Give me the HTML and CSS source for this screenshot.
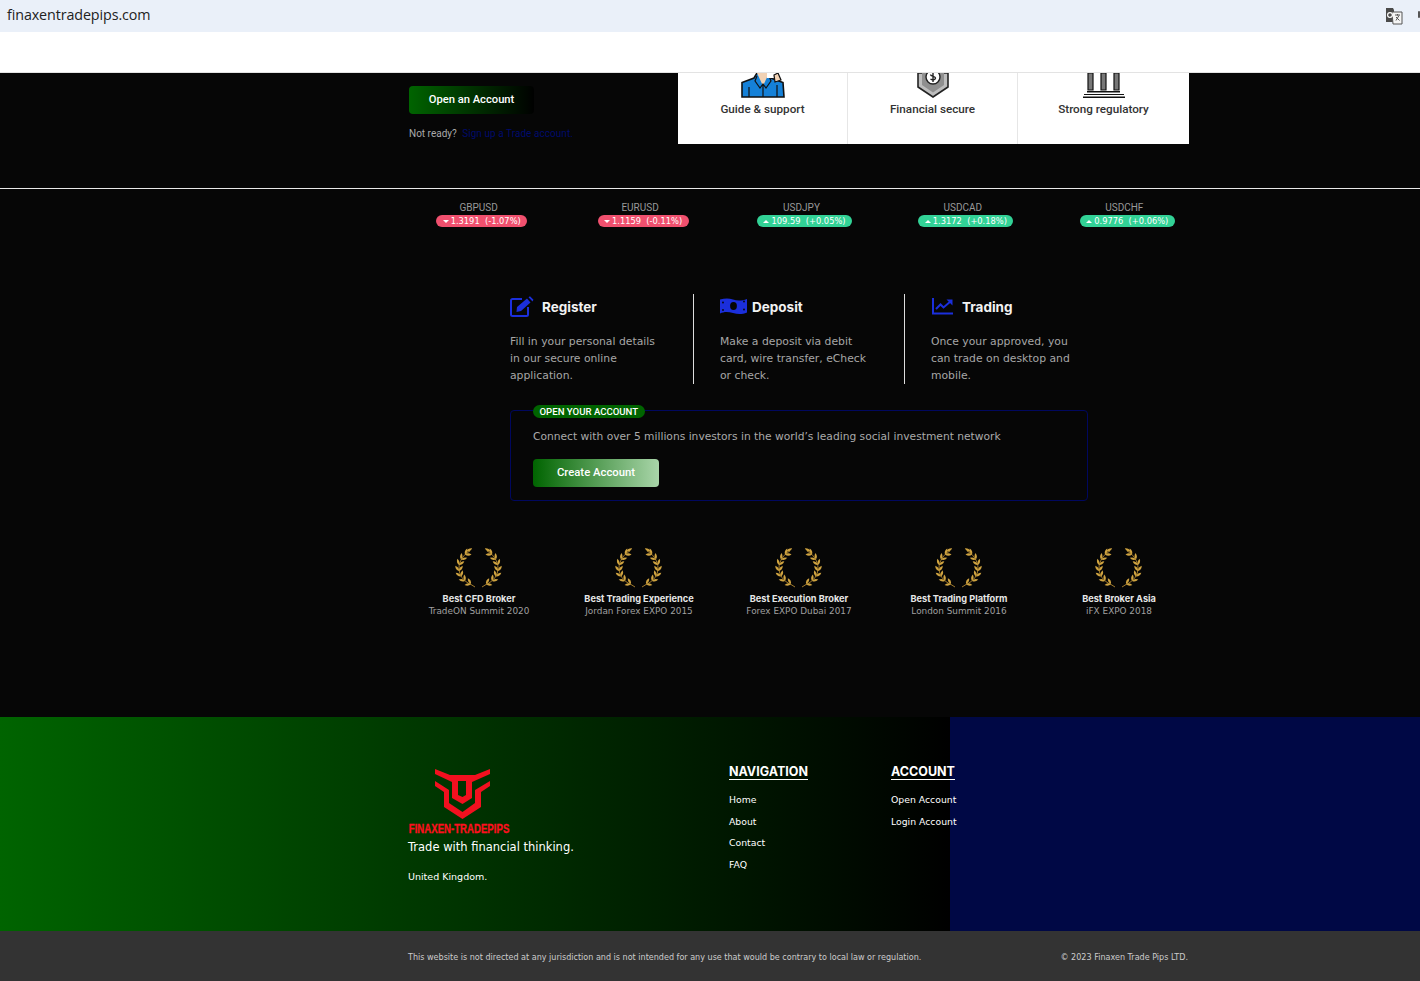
FILE: index.html
```html
<!DOCTYPE html>
<html lang="en">
<head>
<meta charset="utf-8">
<title>finaxentradepips.com</title>
<link rel="stylesheet" href="styles.css">
</head>
<body>
<svg class="defs" width="0" height="0" aria-hidden="true">
  <path id="leaf" d="M0 0Q3-2.400 6.500 0Q3 2.400 0 0Z"/>
  <symbol id="branch" viewBox="0 0 23 40">
    <path d="M20 39L16 36.500C8 33 4 27 4 20C4 13 9 6 15 3" fill="none" stroke="#b08630" stroke-width=".9"/>
    <g fill="#cfa340">
      <use href="#leaf" transform="translate(16 36) rotate(171)"/>
      <use href="#leaf" transform="translate(16 36) rotate(241)"/>
      <use href="#leaf" transform="translate(10 33) rotate(193)"/>
      <use href="#leaf" transform="translate(10 33) rotate(263)"/>
      <use href="#leaf" transform="translate(6 28.500) rotate(215)"/>
      <use href="#leaf" transform="translate(6 28.500) rotate(285)"/>
      <use href="#leaf" transform="translate(4 23) rotate(235)"/>
      <use href="#leaf" transform="translate(4 23) rotate(305)"/>
      <use href="#leaf" transform="translate(4 17) rotate(255)"/>
      <use href="#leaf" transform="translate(4 17) rotate(325)"/>
      <use href="#leaf" transform="translate(6 11.500) rotate(275)"/>
      <use href="#leaf" transform="translate(6 11.500) rotate(345)"/>
      <use href="#leaf" transform="translate(10 6.500) rotate(290)"/>
      <use href="#leaf" transform="translate(10 6.500) rotate(0)"/>
      <use href="#leaf" transform="translate(11.500 3.500) rotate(-30)"/>
    </g>
  </symbol>
  <symbol id="laurel" viewBox="0 0 47 40">
    <use href="#branch" x="0" y="0" width="23" height="40"/>
    <use href="#branch" width="23" height="40" transform="matrix(-1 0 0 1 47 0)"/>
  </symbol>
</svg>

<header class="addressbar">
  <span class="url">finaxentradepips.com</span>
  <svg class="translate" width="18" height="18" viewBox="0 0 18 18">
    <path d="M1 1h7l1 2v12H1z" fill="#4a4a4a"/>
    <path d="M7 5h10v12H8z" fill="#f5f5f5" stroke="#555" stroke-width="1"/>
    <circle cx="5" cy="8" r="2.400" fill="none" stroke="#fff" stroke-width="1.200"/>
    <path d="M10 8h5M12.500 7v1.500M14 8.500l-3 5M11 10l3.500 3.500" fill="none" stroke="#555" stroke-width="1"/>
  </svg>
  <span class="edge-mark"></span>
</header>
<nav class="topnav"></nav>

<main class="page">
  <section class="hero">
    <div class="hero-left">
      <a class="open-btn">Open an Account</a>
      <p class="not-ready">Not ready? <a class="signup">Sign up a Trade account.</a></p>
    </div>
    <div class="hero-cards">
      <div class="hero-card">
        <svg class="hero-icon" width="44" height="25" viewBox="0 0 44 25">
          <path d="M1 24V9.500l12-4.500 3-5h12l2 5 12 4.500 1 14.500z" fill="#1581d8" stroke="#111" stroke-width="1.600"/>
          <path d="M16 0l6 13 6-13z" fill="#f2d2b4"/>
          <path d="M16 3l-2 5 5 7 3-4 3 4 5-7-2-5M22 11v13M8 14v10M36 12v12" fill="none" stroke="#111" stroke-width="1.200"/>
          <path d="M26 0h7v5h-7z" fill="#fff"/>
          <path d="M33 2l4-2 3 7-6 2z" fill="#f2d2b4" stroke="#111" stroke-width="1.200"/>
        </svg>
        <span>Guide &amp; support</span>
      </div>
      <div class="hero-card">
        <svg class="hero-icon" width="32" height="25" viewBox="0 0 32 25">
          <path d="M1 0v14l15 10 15-10V0z" fill="#bdbdbd" stroke="#222" stroke-width="1.600"/>
          <path d="M5 0v12l11 7.500L27 12V0" fill="#8f8f8f"/>
          <circle cx="16" cy="4" r="7" fill="#fff" stroke="#222" stroke-width="1.400"/>
          <path d="M16 -1v10M13.500 6c2 1.500 5 .8 5-1s-5-1.500-5-3.500" fill="none" stroke="#222" stroke-width="1.400"/>
        </svg>
        <span>Financial secure</span>
      </div>
      <div class="hero-card">
        <svg class="hero-icon" width="42" height="25" viewBox="0 0 42 25">
          <path d="M5 0h5v17H5zM18 0h5v17h-5zM31 0h5v17h-5z" fill="#777" stroke="#111" stroke-width="1.200"/>
          <path d="M4 18h33v1.500H4z" fill="#111"/>
          <path d="M1 21h40v1H1zM0 23.500h42V25H0z" fill="#111"/>
        </svg>
        <span>Strong regulatory</span>
      </div>
    </div>
  </section>

  <section class="ticker">
    <div class="tick"><span class="sym">GBPUSD</span><span class="pill down"><i class="arrow"></i>1.3191 &nbsp;(-1.07%)</span></div>
    <div class="tick"><span class="sym">EURUSD</span><span class="pill down"><i class="arrow"></i>1.1159 &nbsp;(-0.11%)</span></div>
    <div class="tick"><span class="sym">USDJPY</span><span class="pill up"><i class="arrow"></i>109.59 &nbsp;(+0.05%)</span></div>
    <div class="tick"><span class="sym">USDCAD</span><span class="pill up"><i class="arrow"></i>1.3172 &nbsp;(+0.18%)</span></div>
    <div class="tick"><span class="sym">USDCHF</span><span class="pill up"><i class="arrow"></i>0.9776 &nbsp;(+0.06%)</span></div>
  </section>

  <section class="steps">
    <article class="step step-a">
      <h3 class="step-title">
        <svg width="24" height="21" viewBox="0 0 24 21"><path d="M12 3H2.500A1.500 1.500 0 0 0 1 4.500v14A1.500 1.500 0 0 0 2.500 20h14a1.500 1.500 0 0 0 1.500-1.500V11" fill="none" stroke="#1b2fdc" stroke-width="2"/><path d="M7 11L17 2.500l3.500 4L11 15l-4.500 1z M18.500 1.300l1.500-1 3.500 3.500-1 1.700z" fill="#1b2fdc"/></svg>
        Register
      </h3>
      <p>Fill in your personal details<br>in our secure online<br>application.</p>
    </article>
    <article class="step step-b">
      <h3 class="step-title">
        <svg width="27" height="18" viewBox="0 0 27 18"><path d="M0 2.500c5-1.500 9-1.500 13 0s9 1.500 14-.5v13.500c-5 2-9 2-14 .5s-9-1.500-13 .5z" fill="#1b2fdc"/><ellipse cx="13.500" cy="9" rx="3.400" ry="3.900" fill="#060606"/><circle cx="3" cy="5.500" r=".9" fill="#060606"/><circle cx="24" cy="4.500" r=".9" fill="#060606"/><circle cx="3" cy="13" r=".9" fill="#060606"/><circle cx="24" cy="12.500" r=".9" fill="#060606"/></svg>
        Deposit
      </h3>
      <p>Make a deposit via debit<br>card, wire transfer, eCheck<br>or check.</p>
    </article>
    <article class="step step-c">
      <h3 class="step-title">
        <svg width="21" height="17" viewBox="0 0 21 17"><path d="M1 0v15.500h20" fill="none" stroke="#1b2fdc" stroke-width="2"/><path d="M4 11l4.500-4.500 3 3L19 3" fill="none" stroke="#1b2fdc" stroke-width="2"/><path d="M14.500 1.500H20.500V7.500z" fill="#1b2fdc"/></svg>
        Trading
      </h3>
      <p>Once your approved, you<br>can trade on desktop and<br>mobile.</p>
    </article>
  </section>

  <section class="cta">
    <span class="cta-badge">OPEN YOUR ACCOUNT</span>
    <p class="cta-text">Connect with over 5 millions investors in the world’s leading social investment network</p>
    <a class="create-btn">Create Account</a>
  </section>

  <section class="awards">
    <div class="award"><svg class="laurel" width="47" height="40"><use href="#laurel"/></svg><strong>Best CFD Broker</strong><span>TradeON Summit 2020</span></div>
    <div class="award"><svg class="laurel" width="47" height="40"><use href="#laurel"/></svg><strong>Best Trading Experience</strong><span>Jordan Forex EXPO 2015</span></div>
    <div class="award"><svg class="laurel" width="47" height="40"><use href="#laurel"/></svg><strong>Best Execution Broker</strong><span>Forex EXPO Dubai 2017</span></div>
    <div class="award"><svg class="laurel" width="47" height="40"><use href="#laurel"/></svg><strong>Best Trading Platform</strong><span>London Summit 2016</span></div>
    <div class="award"><svg class="laurel" width="47" height="40"><use href="#laurel"/></svg><strong>Best Broker Asia</strong><span>iFX EXPO 2018</span></div>
  </section>
</main>

<footer class="footer">
  <div class="brand">
    <svg class="logo" width="56" height="50" viewBox="0 0 56 50">
      <path fill-rule="evenodd" d="M0 0L15 6H40L55 0V5L37 13V29L27.500 35L17 29V13L0 5ZM23 12H31V26L27.500 28L23 26Z" fill="#f2101f"/>
      <path d="M0 12L14 21V34L27.500 43L40 34V21L55 12V17L46 23V38L27.500 50L9 38V23L0 17Z" fill="#f2101f"/>
    </svg>
    <div class="brand-name">FINAXEN-TRADEPIPS</div>
    <div class="tagline">Trade with financial thinking.</div>
    <div class="country">United Kingdom.</div>
  </div>
  <div class="foot-col col-nav">
    <h4>NAVIGATION</h4>
    <a>Home</a><a>About</a><a>Contact</a><a>FAQ</a>
  </div>
  <div class="foot-col col-acc">
    <h4>ACCOUNT</h4>
    <a>Open Account</a><a>Login Account</a>
  </div>
</footer>

<div class="legal">
  <span>This website is not directed at any jurisdiction and is not intended for any use that would be contrary to local law or regulation.</span>
  <span>© 2023 Finaxen Trade Pips LTD.</span>
</div>
</body>
</html>
```
FILE: styles.css
```css
* { box-sizing: border-box; }
html, body { margin: 0; padding: 0; }
body { width: 1420px; height: 981px; overflow: hidden; background: #060606; font-family: "DejaVu Sans", sans-serif; color: #fff; }
h3, h4, p { margin: 0; }
.defs { display: block; height: 0; }

.addressbar { height: 32px; background: #eaf0f9; display: flex; align-items: center; padding-left: 7px; }
.url { font: 14.300px/1 "Open Sans", sans-serif; color: #222; letter-spacing: -.1px; flex: 1; padding-bottom: 2px; }
.translate { margin-right: 15px; }
.edge-mark { width: 2px; height: 7px; background: #555; border-radius: 2px; margin-bottom: 4px; }
.topnav { height: 41px; background: #fff; border-bottom: 1px solid #e3e3e3; }

.page { height: 644px; background: #060606; }

.hero { height: 116px; border-bottom: 1px solid #e8e8e8; padding-left: 409px; display: flex; }
.hero-left { width: 269px; padding-top: 13px; }
.open-btn { display: flex; align-items: center; justify-content: center; width: 125px; height: 28px; padding-bottom: 1px; border-radius: 4px; background: linear-gradient(90deg, #006400, #000); font: 500 11.200px/1 Roboto, sans-serif; color: #fff; }
.not-ready { margin-top: 14px; font: 10px/12px Roboto, sans-serif; color: #aaa; }
.signup { color: #000b6b; letter-spacing: .05px; margin-left: 3px; }
.hero-cards { height: 71px; background: #fff; display: flex; }
.hero-card { width: 170px; display: flex; flex-direction: column; align-items: center; border-right: 1px solid #e6e6e6; color: #333; font: 500 11.700px/14px Roboto, sans-serif; }
.hero-card:last-child { width: 171px; border-right: 0; }
.hero-icon { display: block; margin-bottom: 4px; flex: none; }

.ticker { margin-left: 398px; width: 807px; padding-top: 13px; display: grid; grid-template-columns: repeat(5, 1fr); }
.tick { display: flex; flex-direction: column; align-items: center; }
.sym { font: 10px/12px Roboto, sans-serif; color: #999; }
.pill { height: 12px; margin: 1px 0 0 6px; border-radius: 6px; padding: 0 6.500px; font: 8.300px/12px "DejaVu Sans", sans-serif; color: #fff; white-space: nowrap; display: flex; align-items: center; }
.down { background: #f0506e; }
.up { background: #32d296; }
.arrow { width: 0; height: 0; border-left: 3px solid transparent; border-right: 3px solid transparent; margin-right: 2px; }
.down .arrow { border-top: 3px solid #fff; }
.up .arrow { border-bottom: 3px solid #fff; }

.steps { margin: 67px 0 0 510px; display: flex; height: 90px; }
.step { height: 90px; }
.step-a { width: 184px; border-right: 1px solid #ddd; }
.step-b { width: 211px; border-right: 1px solid #ddd; padding-left: 26px; }
.step-c { padding-left: 26px; }
.step-title { display: flex; align-items: center; gap: 8px; height: 26px; padding-top: 2px; font: 700 13.500px/1 Inter, Roboto, sans-serif; color: #f2f2f2; margin-bottom: 13px; }
.step-title svg { margin-bottom: 4px; }
.step-b .step-title { gap: 5px; }
.step-c .step-title { gap: 9px; }
.step-c .step-title svg { margin-left: 1px; }
.step p { font: 10.800px/17px "DejaVu Sans", sans-serif; color: #a6a6a6; }

.cta { position: relative; margin: 26px 0 0 510px; width: 578px; height: 91px; border: 1px solid #00075e; border-radius: 4px; padding: 17px 0 0 22px; }
.cta-badge { position: absolute; left: 22px; top: -6px; height: 13px; padding: 0 6.500px; border-radius: 7px; background: #006400; font: 500 9.600px/13px Roboto, sans-serif; color: #fff; }
.cta-text { font: 10.700px/17px "DejaVu Sans", sans-serif; color: #aaa; }
.create-btn { display: flex; align-items: center; justify-content: center; margin-top: 14px; width: 126px; height: 28px; padding-bottom: 1px; border-radius: 4px; background: linear-gradient(90deg, #006400, #a9d5a9); font: 500 11.300px/1 Roboto, sans-serif; color: #fff; }

.awards { margin: 47px 0 0 399px; display: grid; grid-template-columns: repeat(5, 160px); }
.award { display: flex; flex-direction: column; align-items: center; }
.laurel { display: block; margin: 0 1px 5px 0; }
.award strong { font: 700 9.200px/12px Inter, Roboto, sans-serif; color: #e6e6e6; white-space: nowrap; }
.award span { font: 8.900px/12px "DejaVu Sans", sans-serif; color: #a0a0a0; white-space: nowrap; }

.footer { height: 214px; background: linear-gradient(90deg, #006400, #000 950px, #000845 950px); display: flex; padding-left: 408px; }
.brand { width: 321px; padding-top: 52px; }
.logo { display: block; margin-left: 27px; }
.brand-name { margin-top: 4px; padding-left: 1px; font: 700 12.500px/13px "Liberation Sans", sans-serif; color: #ff0f1f; -webkit-text-stroke: .3px #ff0f1f; white-space: nowrap; transform-origin: left; transform: scaleX(.77); }
.tagline { margin-top: 4px; font: 11.500px/14px "DejaVu Sans", sans-serif; color: #fff; }
.country { margin-top: 16px; font: 9.500px/14px "DejaVu Sans", sans-serif; color: #fff; }
.foot-col { padding-top: 48px; display: flex; flex-direction: column; align-items: flex-start; }
.col-nav { width: 162px; }
.foot-col h4 { font: 700 12.500px/14px Inter, Roboto, sans-serif; color: #fff; border-bottom: 1px solid #fff; margin-bottom: 9px; }
.foot-col a { font: 9.300px/21.600px "DejaVu Sans", sans-serif; color: #fff; }

.legal { height: 50px; background: #333; padding: 4px 232px 0 408px; display: flex; justify-content: space-between; align-items: center; font: 8.050px/1 "DejaVu Sans", sans-serif; color: #ccc; }
```
